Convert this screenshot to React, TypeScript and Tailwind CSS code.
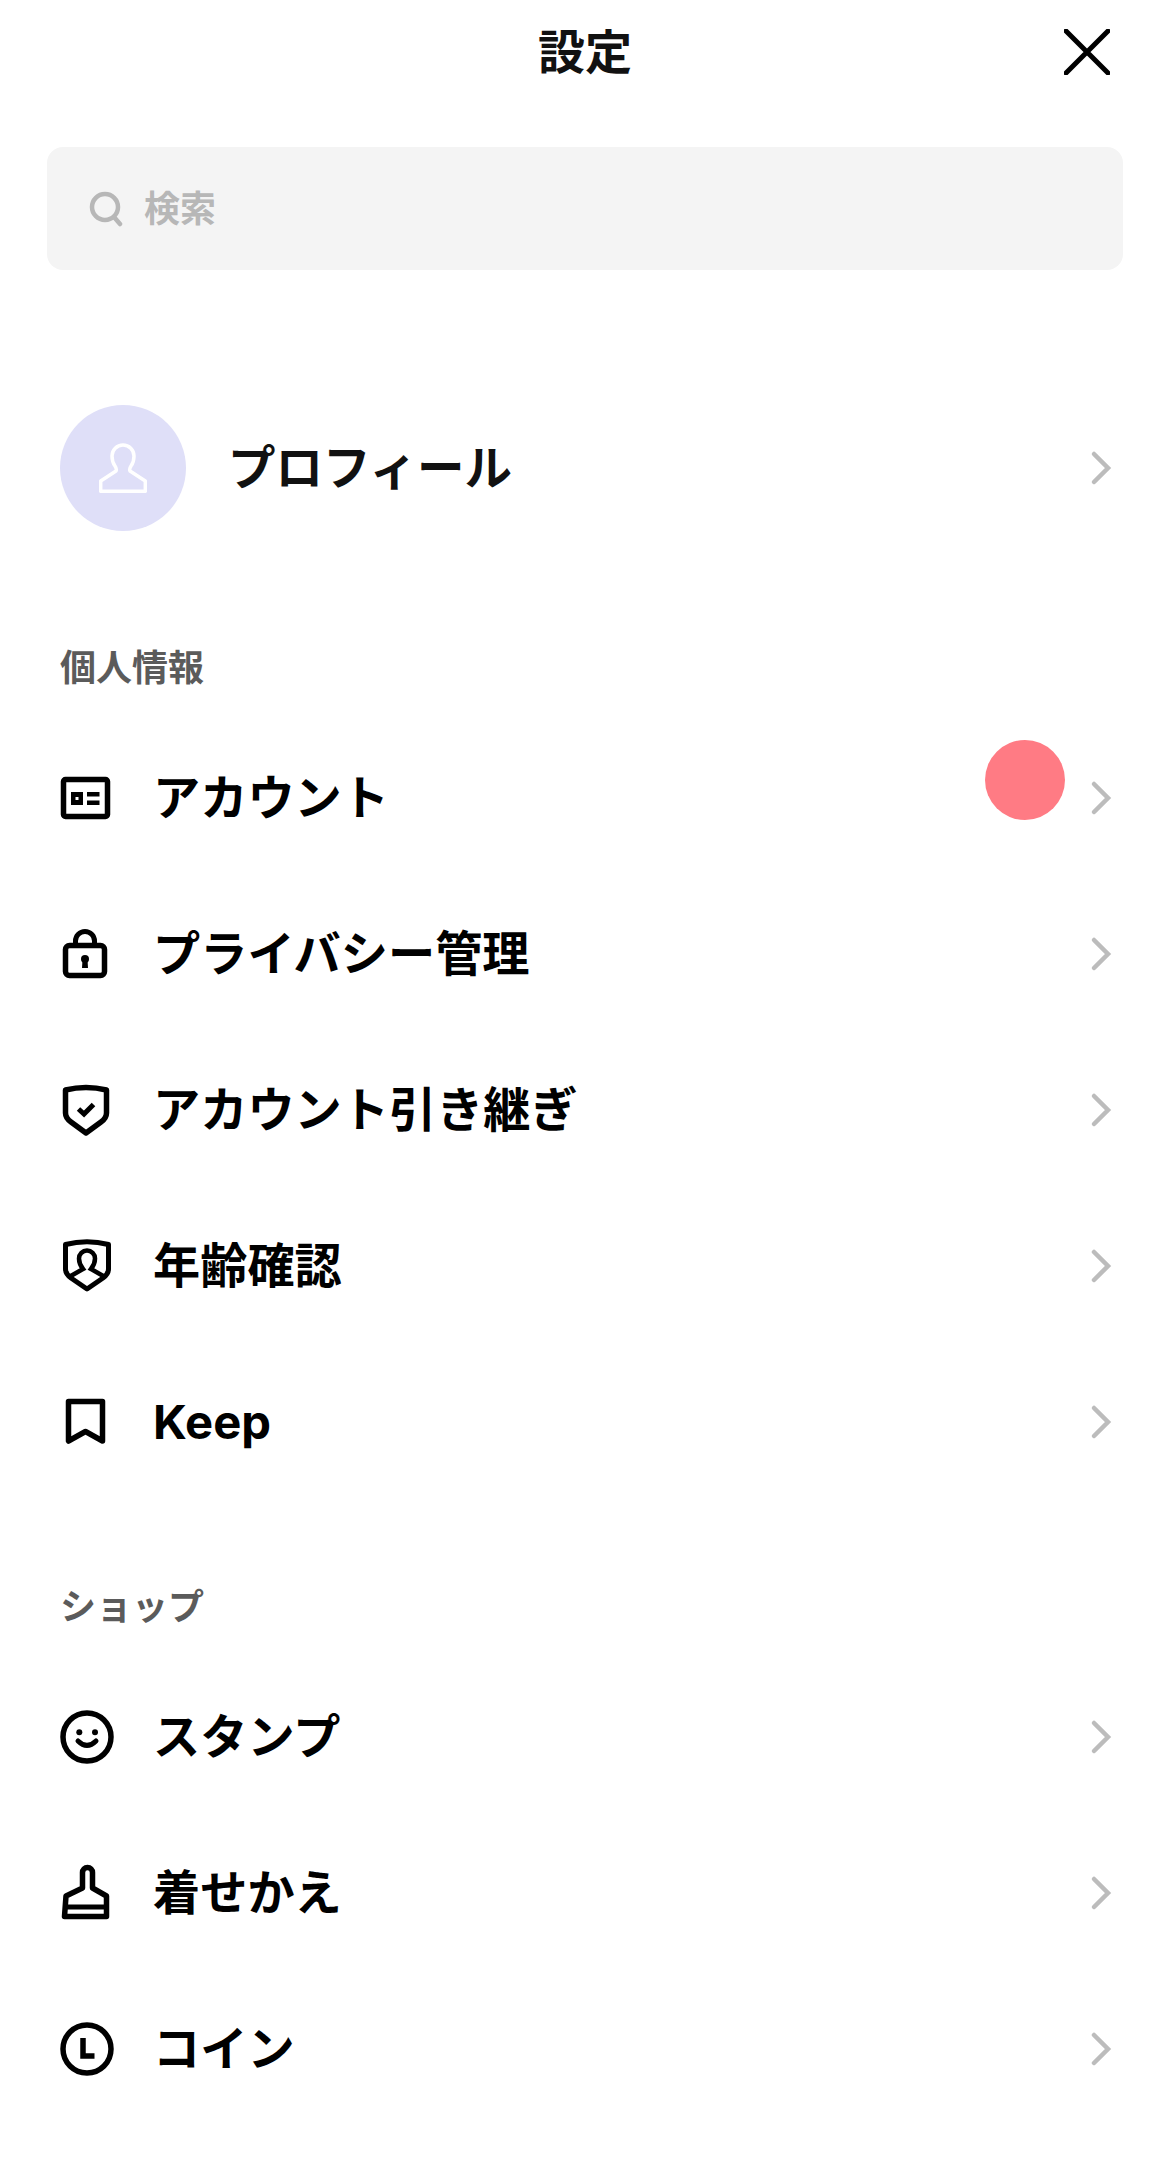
import type { ReactNode } from 'react';

const font = "font-['Inter','Noto_Sans_CJK_JP',sans-serif]";

const Chevron = () => (
  <svg width="24" height="36" viewBox="0 0 24 36" fill="none" className="shrink-0">
    <path d="M5 4 L19 18 L5 32" stroke="#bcbcbc" strokeWidth="4.5" strokeLinecap="round" />
  </svg>
);

const Icon = ({ children }: { children: ReactNode }) => (
  <svg width="60" height="60" viewBox="0 0 60 60" fill="none" stroke="#000" strokeWidth="5" className="shrink-0">
    {children}
  </svg>
);

const AccountIcon = () => (
  <Icon>
    <rect x="7.5" y="11.5" width="44" height="37" rx="2" strokeWidth="5.5" />
    <rect x="15" y="24" width="12" height="13" fill="#000" stroke="none" />
    <rect x="19.5" y="29" width="3" height="3" fill="#fff" stroke="none" />
    <rect x="31" y="24" width="12.5" height="4.5" fill="#000" stroke="none" />
    <rect x="31" y="32.5" width="12.5" height="4.5" fill="#000" stroke="none" />
  </Icon>
);

const LockIcon = () => (
  <Icon>
    <rect x="9.5" y="21.5" width="39" height="30" rx="4" strokeWidth="5.5" />
    <path d="M19.5 21 V17 a9.5 9.5 0 0 1 19 0 V21" />
    <circle cx="29" cy="35" r="4" fill="#000" stroke="none" />
    <path d="M26.5 36 H31.5 L32 44 H26 Z" fill="#000" stroke="none" />
  </Icon>
);

const ShieldCheckIcon = () => (
  <Icon>
    <path
      d="M9.5 10 Q30 5 50.5 10 V33 Q50.5 38 45 42 L30 53 L15 42 Q9.5 38 9.5 33 Z"
      strokeWidth="5.5"
      strokeLinejoin="round"
    />
    <path d="M22.5 29 L28 34 L37.5 24.5" />
  </Icon>
);

const AgeIcon = () => (
  <Icon>
    <path
      d="M9.5 8.5 Q31 3 52.5 8.5 V33 Q52.5 38 47 42 L31 53 L15 42 Q9.5 38 9.5 33 Z"
      strokeLinejoin="round"
    />
    <path d="M13 41 L27 33 Q23 28 23 22.5 a8 8 0 0 1 16 0 Q39 28 35 33 L49 41" strokeWidth="4.5" />
  </Icon>
);

const BookmarkIcon = () => (
  <Icon>
    <path d="M12.5 9.5 H46.5 V49 L29.5 39.5 L12.5 49 Z" strokeWidth="5.5" strokeLinejoin="round" />
  </Icon>
);

const SmileIcon = () => (
  <Icon>
    <circle cx="31" cy="30" r="24" strokeWidth="5.5" />
    <circle cx="23.3" cy="25.3" r="3" fill="#000" stroke="none" />
    <circle cx="39" cy="25.3" r="3" fill="#000" stroke="none" />
    <path d="M22 34 Q31 43 40 34" strokeLinecap="round" />
  </Icon>
);

const BrushIcon = () => (
  <Icon>
    <path
      d="M26.5 25 V9.5 a5 5 0 0 1 10 0 V25 L50.5 33 V53.5 H8.5 L10 33 Z"
      strokeWidth="5.5"
      strokeLinejoin="round"
    />
    <path d="M10 44 H50" />
  </Icon>
);

const CoinIcon = () => (
  <Icon>
    <circle cx="31" cy="30" r="24" strokeWidth="5.5" />
    <path d="M27 19 V37 H38.5" strokeWidth="5.5" />
  </Icon>
);

const accountRows = [
  { icon: <AccountIcon />, label: 'アカウント', badge: true },
  { icon: <LockIcon />, label: 'プライバシー管理' },
  { icon: <ShieldCheckIcon />, label: 'アカウント引き継ぎ' },
  { icon: <AgeIcon />, label: '年齢確認' },
  { icon: <BookmarkIcon />, label: 'Keep' },
];

const shopRows = [
  { icon: <SmileIcon />, label: 'スタンプ' },
  { icon: <BrushIcon />, label: '着せかえ' },
  { icon: <CoinIcon />, label: 'コイン' },
];

const Row = ({ icon, label, badge }: { icon: ReactNode; label: string; badge?: boolean }) => (
  <div className="relative flex h-[156px] items-center pl-[56px] pr-[57px]">
    {icon}
    <span className="ml-[37px] flex-1 text-[47.2px] leading-none font-bold text-black">{label}</span>
    {badge && <span className="absolute left-[985px] top-[20px] h-[80px] w-[80px] rounded-full bg-[#ff7b84]" />}
    <Chevron />
  </div>
);

const SectionLabel = ({ children }: { children: ReactNode }) => (
  <div className="pl-[60px] text-[36px] leading-[44px] font-bold text-[#5b5b5b]">{children}</div>
);

export default function App() {
  return (
    <div className={`${font} h-[2168px] w-[1170px] overflow-hidden bg-white`}>
      <header className="relative flex h-[102px] items-center justify-center">
        <h1 className="text-[47px] leading-none font-bold text-[#111]">設定</h1>
        <svg width="46" height="46" viewBox="0 0 46 46" className="absolute left-[1064px] top-[29px]" fill="none">
          <path d="M2 2 L44 44 M44 2 L2 44" stroke="#000" strokeWidth="5" strokeLinecap="round" />
        </svg>
      </header>

      <div className="ml-[47px] mt-[45px] flex h-[123px] w-[1076px] items-center rounded-[16px] bg-[#f4f4f4] pl-[42px]">
        <svg width="34" height="36" viewBox="0 0 34 36" fill="none" stroke="#b7b7b7" strokeWidth="4.5">
          <circle cx="16" cy="16" r="13" />
          <path d="M25 26 L31 33" strokeLinecap="round" />
        </svg>
        <span className="ml-[21px] text-[36px] leading-none font-bold text-[#b7b7b7]">検索</span>
      </div>

      <div className="mt-[135px] flex items-center pl-[60px] pr-[57px]">
        <div className="flex h-[126px] w-[126px] shrink-0 items-center justify-center rounded-full bg-[#dfdff8]">
          <svg width="48" height="50" viewBox="0 0 48 50" fill="none" stroke="#fff" strokeWidth="3.5">
            <path
              d="M1.7 48.3 H46.3 V38 L31 28 Q30 26 32 23 Q35 19 35 13 a11 11 0 0 0 -22 0 Q13 19 16 23 Q18 26 17 28 L1.7 38 Z"
              strokeLinejoin="round"
            />
          </svg>
        </div>
        <span className="ml-[42px] flex-1 text-[47.5px] leading-none font-bold text-[#111]">プロフィール</span>
        <Chevron />
      </div>

      <div className="mt-[115px]">
        <SectionLabel>個人情報</SectionLabel>
        <div className="mt-[30px]">
          {accountRows.map((row) => (
            <Row key={row.label} {...row} />
          ))}
        </div>
      </div>

      <div className="mt-[85px]">
        <SectionLabel>ショップ</SectionLabel>
        <div className="mt-[30px]">
          {shopRows.map((row) => (
            <Row key={row.label} {...row} />
          ))}
        </div>
      </div>
    </div>
  );
}
